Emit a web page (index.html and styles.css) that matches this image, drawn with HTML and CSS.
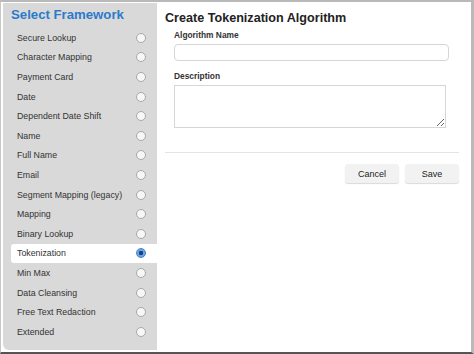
FILE: index.html
```html
<!DOCTYPE html>
<html>
<head>
<meta charset="utf-8">
<link rel="stylesheet" href="styles.css">
</head>
<body>
<div class="frame">
  <aside class="sidebar">
    <h2 class="side-title">Select Framework</h2>
    <ul class="list">
      <li class="item"><span>Secure Lookup</span><i class="radio"></i></li>
      <li class="item"><span>Character Mapping</span><i class="radio"></i></li>
      <li class="item"><span>Payment Card</span><i class="radio"></i></li>
      <li class="item"><span>Date</span><i class="radio"></i></li>
      <li class="item"><span>Dependent Date Shift</span><i class="radio"></i></li>
      <li class="item"><span>Name</span><i class="radio"></i></li>
      <li class="item"><span>Full Name</span><i class="radio"></i></li>
      <li class="item"><span>Email</span><i class="radio"></i></li>
      <li class="item"><span>Segment Mapping (legacy)</span><i class="radio"></i></li>
      <li class="item"><span>Mapping</span><i class="radio"></i></li>
      <li class="item"><span>Binary Lookup</span><i class="radio"></i></li>
      <li class="item selected"><span>Tokenization</span><i class="radio on"></i></li>
      <li class="item"><span>Min Max</span><i class="radio"></i></li>
      <li class="item"><span>Data Cleansing</span><i class="radio"></i></li>
      <li class="item"><span>Free Text Redaction</span><i class="radio"></i></li>
      <li class="item"><span>Extended</span><i class="radio"></i></li>
    </ul>
  </aside>
  <main class="main">
    <h1 class="main-title">Create Tokenization Algorithm</h1>
    <div class="form">
      <label class="label">Algorithm Name</label>
      <input class="input" type="text">
      <label class="label desc">Description</label>
      <textarea class="textarea"></textarea>
    </div>
    <hr class="rule">
    <div class="actions">
      <button class="btn">Cancel</button>
      <button class="btn">Save</button>
    </div>
  </main>
</div>
</body>
</html>
```
FILE: styles.css
```css
* { box-sizing: border-box; }
html, body { margin: 0; padding: 0; background: #fff; }
body {
  width: 474px; height: 354px; overflow: hidden;
  font-family: "Liberation Sans", Arial, sans-serif;
  color: #333;
}
.frame {
  width: 474px; height: 354px;
  border-top: 2px solid #b9b9b9;
  border-right: 3px solid #b9b9b9;
  border-bottom: 2px solid #555;
  border-left: 1px solid #c8c8c8;
  display: flex;
  padding: 1px 0 2px 2px;
  background: #fff;
}
.sidebar {
  width: 154px;
  background: #d9d9d9;
  border-radius: 0 0 0 6px;
  padding: 4px 0 0 0;
  flex: none;
}
.side-title {
  margin: 0 0 5px 8px;
  font-size: 13.2px;
  line-height: 16px;
  font-weight: bold;
  color: #2b7bcb;
}
.list { list-style: none; margin: 0; padding: 0; }
.item {
  height: 19.6px;
  display: flex; align-items: center; justify-content: space-between;
  padding: 0 11px 0 6px;
  margin-left: 8px;
  font-size: 8.8px;
  color: #333;
  white-space: nowrap;
}
.item.selected {
  background: #fff;
  border-radius: 3px 0 0 3px;
}
.radio {
  width: 10px; height: 10px; border-radius: 50%;
  border: 1px solid #a8a8a8;
  background: #f7f7f7;
  display: block;
  flex: none;
}
.radio.on {
  border-color: #4a7fc0;
  background: radial-gradient(circle, #1b3f86 0 2px, #6aa6e6 2.5px);
}
.main { flex: 1; padding: 8px 12px 0 8px; }
.main-title {
  margin: 0; font-size: 12.6px; line-height: 15px; font-weight: bold; color: #222;
}
.form { padding: 4px 0 0 9px; display: flex; flex-direction: column; }
.label { font-size: 8.4px; font-weight: bold; color: #333; margin-bottom: 4px; }
.label.desc { margin-top: 10px; }
.input {
  width: 275px; height: 17px;
  border: 1px solid #d6d6d6; border-radius: 4px;
}
.textarea {
  width: 272px; height: 43px;
  border: 1px solid #d6d6d6; border-radius: 0; resize: vertical;
  font-family: inherit;
}
.rule {
  border: 0; border-top: 1px solid #e4e4e4;
  margin: 24px 0 0 0;
}
.actions { display: flex; justify-content: flex-end; gap: 6px; margin-top: 11px; }
.btn {
  width: 54px; height: 19px;
  border: 0; border-radius: 3px;
  background: #f2f2f2;
  box-shadow: 0 1px 1px rgba(0,0,0,0.15);
  font-family: inherit; font-size: 9px; color: #222;
}
```
